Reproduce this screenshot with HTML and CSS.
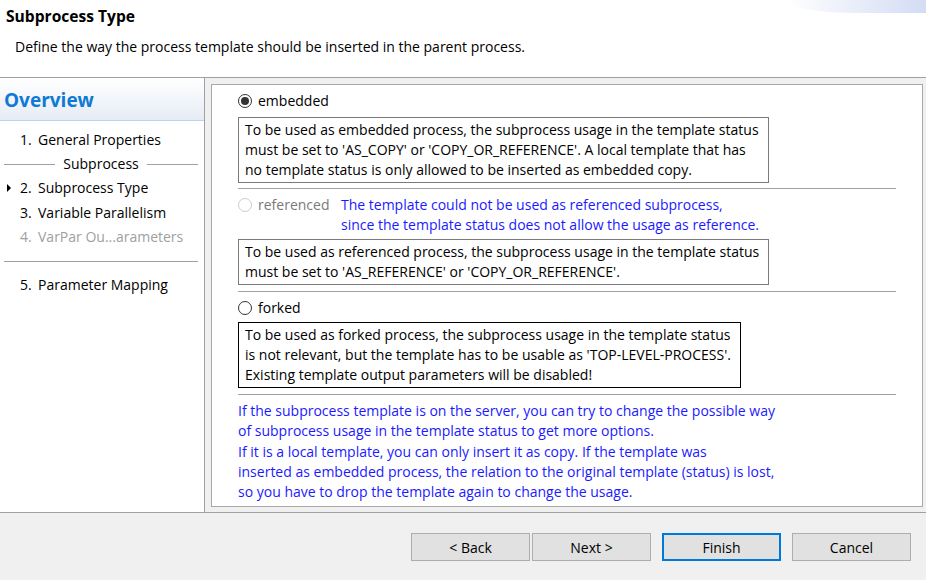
FILE: index.html
```html
<!DOCTYPE html>
<html>
<head>
<meta charset="utf-8">
<link rel="stylesheet" href="styles.css">
</head>
<body>
<div class="header">
  <div class="title">Subprocess Type</div>
  <div class="desc">Define the way the process template should be inserted in the parent process.</div>
</div>
<div class="main">
  <div class="nav">
    <div class="nav-head">Overview</div>
    <div class="nav-list">
      <div class="item"><span class="num">1.</span>General Properties</div>
      <div class="group"><span class="line"></span><span class="gtext">Subprocess</span><span class="line"></span></div>
      <div class="item current"><svg class="arrow" width="4" height="8" viewBox="0 0 4 8"><path d="M0 0 L4 4 L0 8 Z" fill="#000"/></svg><span class="num">2.</span>Subprocess Type</div>
      <div class="item"><span class="num">3.</span>Variable Parallelism</div>
      <div class="item disabled"><span class="num">4.</span>VarPar Ou...arameters</div>
      <div class="group"><span class="line"></span></div>
      <div class="item"><span class="num">5.</span>Parameter Mapping</div>
    </div>
  </div>
  <div class="content">
    <div class="section">
      <div class="radio-row">
        <span class="radio checked"></span><span class="rlabel">embedded</span>
      </div>
      <div class="box box1">To be used as embedded process, the subprocess usage in the template status<br>must be set to 'AS_COPY' or 'COPY_OR_REFERENCE'. A local template that has<br>no template status is only allowed to be inserted as embedded copy.</div>
    </div>
    <div class="sep"></div>
    <div class="section">
      <div class="radio-row">
        <div class="rfixed"><span class="radio disabled"></span><span class="rlabel disabled">referenced</span></div>
        <div class="blue">The template could not be used as referenced subprocess,<br>since the template status does not allow the usage as reference.</div>
      </div>
      <div class="box">To be used as referenced process, the subprocess usage in the template status<br>must be set to 'AS_REFERENCE' or 'COPY_OR_REFERENCE'.</div>
    </div>
    <div class="sep sep-wide"></div>
    <div class="section">
      <div class="radio-row">
        <span class="radio"></span><span class="rlabel">forked</span>
      </div>
      <div class="box box3">To be used as forked process, the subprocess usage in the template status<br>is not relevant, but the template has to be usable as 'TOP-LEVEL-PROCESS'.<br>Existing template output parameters will be disabled!</div>
    </div>
    <div class="sep sep-wide"></div>
    <div class="blue info">If the subprocess template is on the server, you can try to change the possible way<br>of subprocess usage in the template status to get more options.<br>If it is a local template, you can only insert it as copy. If the template was<br>inserted as embedded process, the relation to the original template (status) is lost,<br>so you have to drop the template again to change the usage.</div>
  </div>
</div>
<div class="footer">
  <button class="btn">&lt; Back</button>
  <button class="btn next">Next &gt;</button>
  <button class="btn finish">Finish</button>
  <button class="btn cancel">Cancel</button>
</div>
</body>
</html>
```
FILE: styles.css
```css
html, body {
  margin: 0;
  padding: 0;
}
body {
  width: 926px;
  height: 580px;
  overflow: hidden;
  font-family: "Open Sans", "Noto Sans", sans-serif;
  font-size: 14px;
  color: #000;
  background: #f0f0f0;
}
.header {
  position: relative;
  background: #fff;
  border-bottom: 1px solid #a0a0a0;
  box-sizing: border-box;
  height: 78px;
}
.header::after {
  content: "";
  position: absolute;
  top: 0;
  right: 0;
  width: 140px;
  height: 13px;
  border-bottom-left-radius: 70px 13px;
  background: linear-gradient(to right, rgba(214, 223, 246, 0), #d3dcf4);
}
.title {
  position: relative;
  z-index: 1;
  font-weight: bold;
  font-size: 15.6px;
  padding: 6px 0 0 6px;
  line-height: 20px;
}
.desc {
  padding: 11px 0 0 15px;
  line-height: 20px;
}
.main {
  display: flex;
  height: 434px;
}
.nav {
  background: #fff;
  border-right: 1px solid #a0a0a0;
  box-sizing: border-box;
  width: 205px;
}
.nav-head {
  height: 43px;
  box-sizing: border-box;
  border-bottom: 1px solid #c4d2e2;
  background: linear-gradient(to bottom, #ffffff, #e6ecf5);
  color: #0e7ad6;
  font-weight: bold;
  font-size: 19px;
  padding: 11px 0 0 4px;
  line-height: 22px;
}
.nav-list {
  padding: 7px 6px 0 4px;
}
.item {
  position: relative;
  height: 24.2px;
  line-height: 24.2px;
  padding-left: 16px;
  white-space: nowrap;
}
.item .num {
  display: inline-block;
  width: 18px;
}
.item .arrow {
  position: absolute;
  left: 3px;
  top: 8px;
}
.item.disabled {
  color: #a0a0a0;
}
.group {
  height: 24.2px;
  display: flex;
  align-items: center;
  gap: 8px;
}
.group .line {
  flex: 1;
  height: 1px;
  background: #a0a0a0;
}
.group .gtext {
  line-height: 24px;
}
.content {
  flex: 1;
  margin: 6px 3px 5px 6px;
  background: #fff;
  border: 1px solid #a9a9a9;
  padding: 6px 26px 0 26px;
}
.section {
  display: flex;
  flex-direction: column;
  align-items: flex-start;
}
.radio-row {
  display: flex;
  align-items: flex-start;
  line-height: 20px;
}
.rfixed {
  display: flex;
  align-items: center;
  width: 103px;
  height: 20px;
}
.radio {
  width: 14px;
  height: 14px;
  box-sizing: border-box;
  border: 1px solid #333;
  border-radius: 50%;
  margin: 3px 6px 0 0;
  position: relative;
  flex: none;
}
.rfixed .radio {
  margin-top: 0;
}
.radio.checked::after {
  content: "";
  position: absolute;
  left: 2px;
  top: 2px;
  width: 8px;
  height: 8px;
  border-radius: 50%;
  background: #333;
}
.radio.disabled {
  border-color: #cccccc;
}
.rlabel.disabled {
  color: #7a7a7a;
}
.blue {
  color: #1a1aff;
  line-height: 20px;
  white-space: nowrap;
}
.box {
  margin-top: 4px;
  border: 1px solid #7a7a7a;
  padding: 2px 9px 2px 6px;
  line-height: 20px;
  white-space: nowrap;
}
.box1 {
  margin-top: 6px;
}
.box3 {
  border-color: #000;
}
.sep {
  height: 1px;
  background: #a0a0a0;
  margin: 5px 0 6px 0;
}
.sep-wide {
  margin-top: 6px;
}
.info {
  line-height: 20.25px;
}
.footer {
  border-top: 1px solid #a0a0a0;
  display: flex;
  justify-content: flex-end;
  padding: 20px 15px 0 0;
  height: 68px;
  box-sizing: border-box;
}
.btn {
  width: 119px;
  height: 28px;
  box-sizing: border-box;
  background: #e1e1e1;
  border: 1px solid #adadad;
  font-family: inherit;
  font-size: 14px;
  color: #000;
  padding: 0;
  margin: 0;
}
.next {
  margin-left: 2px;
}
.finish {
  margin-left: 11px;
  border: 2px solid #0078d7;
}
.cancel {
  margin-left: 11px;
}
```
